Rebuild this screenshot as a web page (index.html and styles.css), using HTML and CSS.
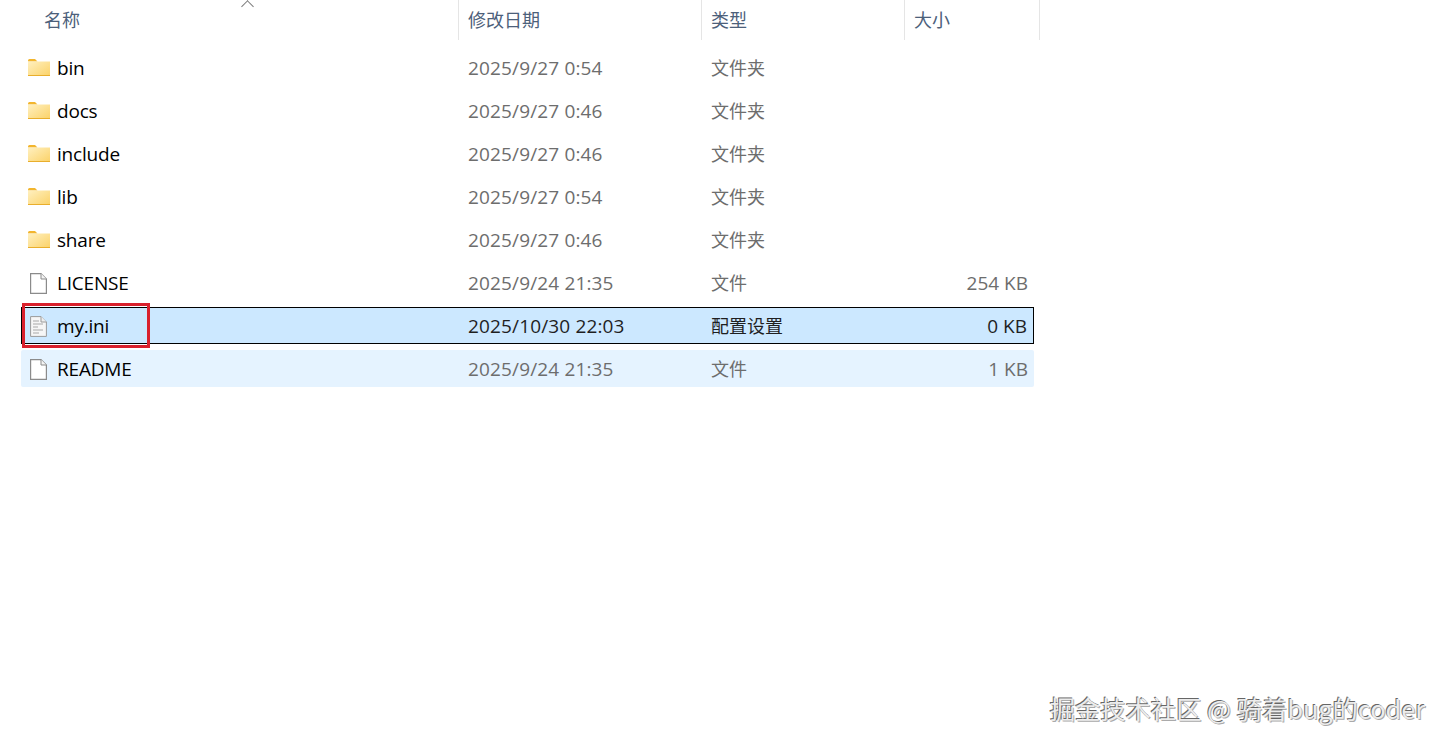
FILE: index.html
```html
<html>
<head>
  <title>Explorer</title>
  <link rel="stylesheet" href="styles.css">
</head>
<body>
  <svg class="defs" width="0" height="0">
    <symbol id="folder" viewBox="0 0 22 17">
      <defs>
        <linearGradient id="folderFill" x1="0" y1="0" x2="1" y2="1">
          <stop offset="0" stop-color="#fff0c0"/>
          <stop offset="1" stop-color="#fbd268"/>
        </linearGradient>
      </defs>
      <path d="M0 1.5 Q0 0 1.5 0 H7 L9.5 2.5 H0 Z" fill="#f2b52e"/>
      <rect x="0" y="2.5" width="22" height="14.5" fill="url(#folderFill)"/>
      <rect x="0" y="16" width="22" height="1" fill="#e9ae2c"/>
    </symbol>
    <symbol id="file" viewBox="0 0 17 21">
      <path d="M.6.6 H11 L16.4 6 V20.4 H.6 Z" fill="#fff" stroke="#8b8b8b" stroke-width="1.2"/>
      <path d="M11 .6 V6 H16.4" fill="#f4f4f4" stroke="#8b8b8b" stroke-width="1"/>
    </symbol>
    <symbol id="config" viewBox="0 0 17 21">
      <path d="M.6.6 H11 L16.4 6 V20.4 H.6 Z" fill="#f6f6f6" stroke="#9a9a9a" stroke-width="1"/>
      <path d="M11 .6 V6 H16.4" fill="#eee" stroke="#9a9a9a" stroke-width="1"/>
      <path d="M3 5 H9 M3 8 H13 M3 11 H8 M3 14 H13 M3 17 H9" stroke="#c2c2c2" stroke-width="1.3"/>
    </symbol>
  </svg>

  <div class="header">
    <div class="col-head head-name">名称<span class="sort-arrow"></span></div>
    <div class="col-head head-date">修改日期</div>
    <div class="col-head head-type">类型</div>
    <div class="col-head head-size">大小</div>
  </div>

  <div class="list">
    <div class="row">
      <div class="name"><svg class="icon-folder"><use href="#folder"/></svg>bin</div>
      <div class="date">2025/9/27 0:54</div><div class="type">文件夹</div><div class="size"></div>
    </div>
    <div class="row">
      <div class="name"><svg class="icon-folder"><use href="#folder"/></svg>docs</div>
      <div class="date">2025/9/27 0:46</div><div class="type">文件夹</div><div class="size"></div>
    </div>
    <div class="row">
      <div class="name"><svg class="icon-folder"><use href="#folder"/></svg>include</div>
      <div class="date">2025/9/27 0:46</div><div class="type">文件夹</div><div class="size"></div>
    </div>
    <div class="row">
      <div class="name"><svg class="icon-folder"><use href="#folder"/></svg>lib</div>
      <div class="date">2025/9/27 0:54</div><div class="type">文件夹</div><div class="size"></div>
    </div>
    <div class="row">
      <div class="name"><svg class="icon-folder"><use href="#folder"/></svg>share</div>
      <div class="date">2025/9/27 0:46</div><div class="type">文件夹</div><div class="size"></div>
    </div>
    <div class="row">
      <div class="name"><svg class="icon-file"><use href="#file"/></svg>LICENSE</div>
      <div class="date">2025/9/24 21:35</div><div class="type">文件</div><div class="size">254 KB</div>
    </div>
    <div class="row selected">
      <div class="name"><svg class="icon-file"><use href="#config"/></svg>my.ini</div>
      <div class="date">2025/10/30 22:03</div><div class="type">配置设置</div><div class="size">0 KB</div>
      <div class="red-box"></div>
    </div>
    <div class="row hovered">
      <div class="name"><svg class="icon-file"><use href="#file"/></svg>README</div>
      <div class="date">2025/9/24 21:35</div><div class="type">文件</div><div class="size">1 KB</div>
    </div>
  </div>

  <div class="watermark">掘金技术社区 @ 骑着bug的coder</div>
</body>
</html>
```

FILE: styles.css
```css
body {
  margin: 0;
  background: #fff;
  font-family: "Open Sans", "Noto Sans CJK SC", sans-serif;
  font-size: 19px;
  color: #000;
  overflow: hidden;
  height: 747px;
  position: relative;
}

.defs {
  display: block;
  height: 0;
}

/* column header */
.header {
  display: grid;
  grid-template-columns: 459px 243px 203px 135px;
  height: 40px;
}

.col-head {
  border-right: 1px solid #e5e5e5;
  padding-left: 9px;
  height: 40px;
  line-height: 41px;
  font-size: 18px;
  color: #4c607a;
  position: relative;
}

.head-name {
  padding-left: 44px;
}

.sort-arrow {
  position: absolute;
  left: 243px;
  top: 2px;
  width: 8px;
  height: 8px;
  border-left: 1px solid #7a7a7a;
  border-top: 1px solid #7a7a7a;
  transform: rotate(45deg);
}

/* file rows */
.list {
  display: flex;
  flex-direction: column;
  gap: 6px;
  width: 1013px;
  margin: 9px 0 0 21px;
}

.row {
  display: grid;
  grid-template-columns: 437px 243px 203px 130px;
  height: 37px;
  padding-top: 1px;
  line-height: 36px;
  box-sizing: border-box;
  position: relative;
}

.name {
  display: flex;
  align-items: center;
  padding-left: 7px;
  letter-spacing: -0.2px;
}

.icon-folder {
  width: 22px;
  height: 17px;
  margin: 0 7px 1px 0;
}

.icon-file {
  width: 17px;
  height: 21px;
  margin: 0 10px 0 2px;
}

.date,
.type,
.size {
  color: #6d6d6d;
}

.date {
  padding-left: 10px;
  letter-spacing: 0.15px;
}

.type {
  padding-left: 10px;
  font-size: 18px;
}

.size {
  text-align: right;
  padding-right: 6px;
}

.selected {
  background: #cce8ff;
  border: 1px solid #000;
  padding-top: 0;
  line-height: 37px;
  grid-template-columns: 436px 243px 203px 129px;
}

.selected .date,
.selected .type,
.selected .size {
  color: #1f1f1f;
}

.selected .name {
  padding-left: 6px;
}

.hovered {
  background: #e5f3ff;
  border-radius: 2px;
}

.red-box {
  position: absolute;
  left: 0;
  top: -5px;
  width: 128px;
  height: 45px;
  box-sizing: border-box;
  border: 3px solid #d9202c;
}

.watermark {
  position: absolute;
  right: 21px;
  top: 690px;
  font-family: "Noto Sans CJK SC", sans-serif;
  font-size: 25.3px;
  line-height: 36px;
  color: #ececec;
  text-shadow: -1px -1px 0 #666, 1px 1px 0 #aaa;
  white-space: nowrap;
}
```
